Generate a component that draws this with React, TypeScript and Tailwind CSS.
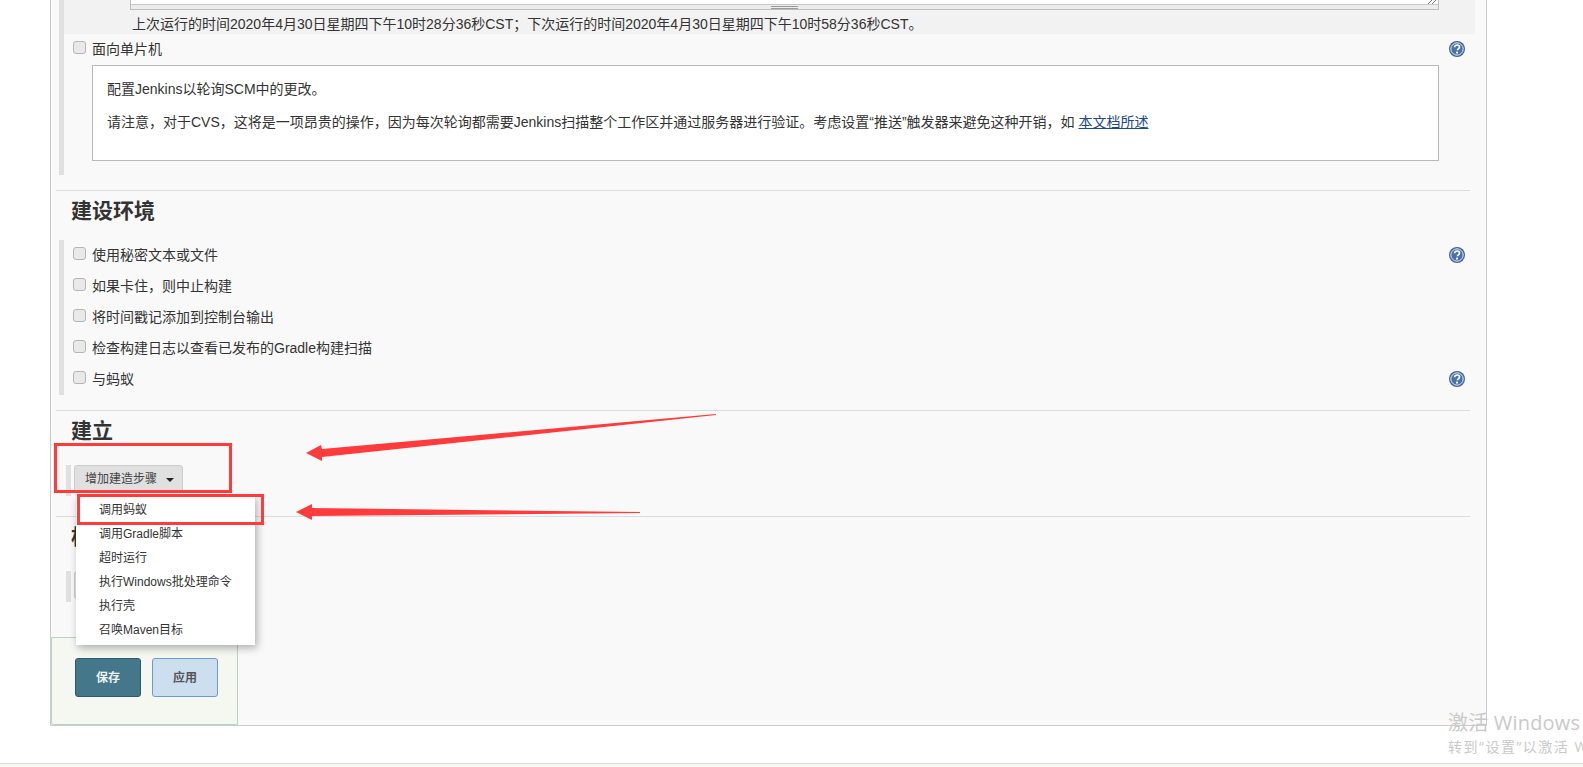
const font = "[font-family:'Liberation_Sans','Noto_Sans_CJK_SC',sans-serif]";

function HelpIcon() {
  return (
    <svg width="16" height="16" viewBox="0 0 16 16" className="mb-[2px] shrink-0">
      <circle cx="8" cy="8" r="8" fill="#3d6199" />
      <circle cx="8" cy="8" r="6.2" fill="#4a72aa" stroke="#e4ebf4" strokeWidth="1" />
      <path
        d="M5.6 6.2c0-1.4 1-2.2 2.5-2.2s2.4.8 2.4 2c0 1-.6 1.4-1.2 1.9-.6.4-.8.7-.8 1.3"
        fill="none"
        stroke="#fff"
        strokeWidth="1.7"
      />
      <rect x="7.1" y="10.6" width="1.9" height="1.9" fill="#fff" />
    </svg>
  );
}

function CheckRow({ label, help }: { label: string; help?: boolean }) {
  return (
    <div className="flex h-[31px] items-center pl-[9px] pr-[10px]">
      <span className="mb-[4px] h-[13px] w-[13px] shrink-0 rounded-[3px] border border-[#b5b5b5] bg-[#e9e9e9]" />
      <span className="ml-[6px] flex-1 text-[14px] text-[#333]">{label}</span>
      {help && <HelpIcon />}
    </div>
  );
}

function Arrow({ className, points, w, h }: { className: string; points: string; w: number; h: number }) {
  return (
    <svg width={w} height={h} viewBox={`0 0 ${w} ${h}`} className={className}>
      <polygon points={points} fill="#ff3b3b" />
    </svg>
  );
}

const menuItems = ["调用蚂蚁", "调用Gradle脚本", "超时运行", "执行Windows批处理命令", "执行壳", "召唤Maven目标"];

export default function App() {
  return (
    <div className={`relative h-[767px] w-[1583px] overflow-hidden bg-white ${font}`}>
      <div className="relative ml-[50px] h-[726px] w-[1437px] border-x border-b border-[#cccccc] bg-[#f9f9f9]">
        {/* 构建触发器 */}
        <div className="ml-[8px] mr-[11px] flex">
          <div className="w-[5px] shrink-0 bg-[#e0e0e0]" />
          <div className="flex-1">
            <div className="flex h-[34px] bg-[#f2f2f2] pl-[66px] pr-[36px]">
              <div className="flex flex-1 flex-col">
                <div className="flex h-[10px] flex-col items-center rounded-b-[1px] border-x border-b border-[#bdbdbd] bg-[#ececec]">
                  <div className="flex h-[5px] w-full justify-end border-b border-[#c8c8c8] bg-white">
                    <svg width="9" height="4" viewBox="0 0 9 4" className="mr-[1px]">
                      <path d="M0 4l4-4M4 4l4-4" stroke="#777" strokeWidth="1" />
                    </svg>
                  </div>
                  <div className="mt-[1px] h-[3px] w-[27px] border-y border-[#9a9a9a]" />
                </div>
                <div className="pl-[2px] pt-[6px] text-[14px] leading-[16px] text-[#333]">
                  上次运行的时间2020年4月30日星期四下午10时28分36秒CST；下次运行的时间2020年4月30日星期四下午10时58分36秒CST。
                </div>
              </div>
            </div>
            <div className="flex h-[31px] items-center pl-[9px] pr-[10px]">
              <span className="mb-[4px] h-[13px] w-[13px] shrink-0 rounded-[3px] border border-[#b5b5b5] bg-[#e9e9e9]" />
              <span className="ml-[6px] flex-1 text-[14px] text-[#333]">面向单片机</span>
              <HelpIcon />
            </div>
            <div className="ml-[28px] mr-[36px] h-[96px] border border-[#b9b9b9] bg-white pl-[14px] pr-[15px] pt-[14px] text-[14px] leading-[18px] text-[#333]">
              <p>配置Jenkins以轮询SCM中的更改。</p>
              <p className="mt-[15px]">
                请注意，对于CVS，这将是一项昂贵的操作，因为每次轮询都需要Jenkins扫描整个工作区并通过服务器进行验证。考虑设置“推送”触发器来避免这种开销，如{" "}
                <a className="text-[#204a87] underline">本文档所述</a>
              </p>
            </div>
            <div className="h-[14px]" />
          </div>
        </div>

        {/* 建设环境 */}
        <div className="ml-[5px] mr-[16px] mt-[15px] border-t border-[#dcdcdc] pl-[15px] pt-[5px]">
          <h2 className="text-[21px] font-bold leading-[30px] text-[#333]">建设环境</h2>
        </div>
        <div className="ml-[8px] mr-[11px] mt-[14px] border-l-[5px] border-[#e0e0e0]">
          <CheckRow label="使用秘密文本或文件" help />
          <CheckRow label="如果卡住，则中止构建" />
          <CheckRow label="将时间戳记添加到控制台输出" />
          <CheckRow label="检查构建日志以查看已发布的Gradle构建扫描" />
          <CheckRow label="与蚂蚁" help />
        </div>

        {/* 建立 */}
        <div className="ml-[5px] mr-[16px] mt-[15px] border-t border-[#dcdcdc] pl-[15px] pt-[5px]">
          <h2 className="text-[21px] font-bold leading-[30px] text-[#333]">建立</h2>
        </div>
        <div className="ml-[15px] mt-[19px] flex h-[31px] border-l-[5px] border-[#e0e0e0] pl-[3px]">
          <button className="flex h-[28px] w-[109px] items-center rounded-[3px] border border-[#ccc] bg-[#e0e0e0] pl-[10px] text-[12px] font-normal text-[#444]">
            增加建造步骤
            <span className="ml-[9px] mt-[1px] h-0 w-0 border-x-[4px] border-t-[4px] border-x-transparent border-t-[#222]" />
          </button>
        </div>

        {/* 构建后操作，被菜单盖住 */}
        <div className="ml-[5px] mr-[16px] mt-[20px] border-t border-[#dcdcdc] pl-[15px] pt-[5px]">
          <h2 className="text-[21px] font-bold leading-[30px] text-[#333]">构建后操作</h2>
        </div>
        <div className="ml-[15px] mt-[19px] flex h-[31px] border-l-[5px] border-[#e0e0e0] pl-[3px]">
          <div className="h-[28px] w-[109px] rounded-[3px] border border-[#ccc] bg-[#e0e0e0]" />
        </div>

        {/* 保存 */}
        <div className="absolute bottom-0 left-0 flex h-[88px] w-[187px] gap-[11px] rounded-bl-[2px] border border-[#b9d3c3] bg-[#f4f8f1] pl-[23px] pt-[20px]">
          <button className="h-[39px] w-[66px] rounded-[3px] border border-[#2f5a6c] bg-[#44778a] text-[12px] font-bold text-[#eef3f5]">
            保存
          </button>
          <button className="h-[39px] w-[66px] rounded-[3px] border border-[#6a9bd0] bg-[#cddeef] text-[12px] font-bold text-[#555]">
            应用
          </button>
        </div>
      </div>

      {/* 页脚 */}
      <div className="mt-[37px] h-[4px] border-t border-[#d9d9d9] bg-[#f8f9f3]" />

      {/* 下拉菜单 */}
      <div className="absolute left-[76px] top-[496px] flex w-[179px] flex-col bg-white pb-[3px] pt-[2px] shadow-[2px_3px_8px_rgba(0,0,0,0.3)]">
        {menuItems.map((item) => (
          <div key={item} className="h-[24px] pl-[23px] text-[12px] leading-[24px] text-[#333]">
            {item}
          </div>
        ))}
      </div>

      {/* 标注 */}
      <div className="absolute left-[54px] top-[443px] h-[50px] w-[178px] border-[3px] border-[#ff3b3b]" />
      <div className="absolute left-[77px] top-[494px] h-[31px] w-[187px] border-[3px] border-[#ff3b3b]" />
      <Arrow
        className="absolute left-[305px] top-[413px]"
        w={412}
        h={49}
        points="1,40 16,32 17,36 411,1 411,2 17,44 17,48"
      />
      <Arrow
        className="absolute left-[295px] top-[503px]"
        w={346}
        h={18}
        points="1,9 17,1 17,5 345,9 345,10 17,13 17,17"
      />

      {/* Windows 水印 */}
      <div className="absolute left-[1448px] top-[709px] whitespace-nowrap text-[20px] leading-[28px] tracking-[0.2px] text-[#c9c9c9] [font-family:'Open_Sans','Noto_Sans_CJK_SC',sans-serif]">
        激活 Windows
      </div>
      <div className="absolute left-[1448px] top-[737px] whitespace-nowrap text-[14px] leading-[20px] tracking-[1.5px] text-[#c9c9c9] [font-family:'Open_Sans','Noto_Sans_CJK_SC',sans-serif]">
        转到“设置”以激活 Windows。
      </div>
    </div>
  );
}
